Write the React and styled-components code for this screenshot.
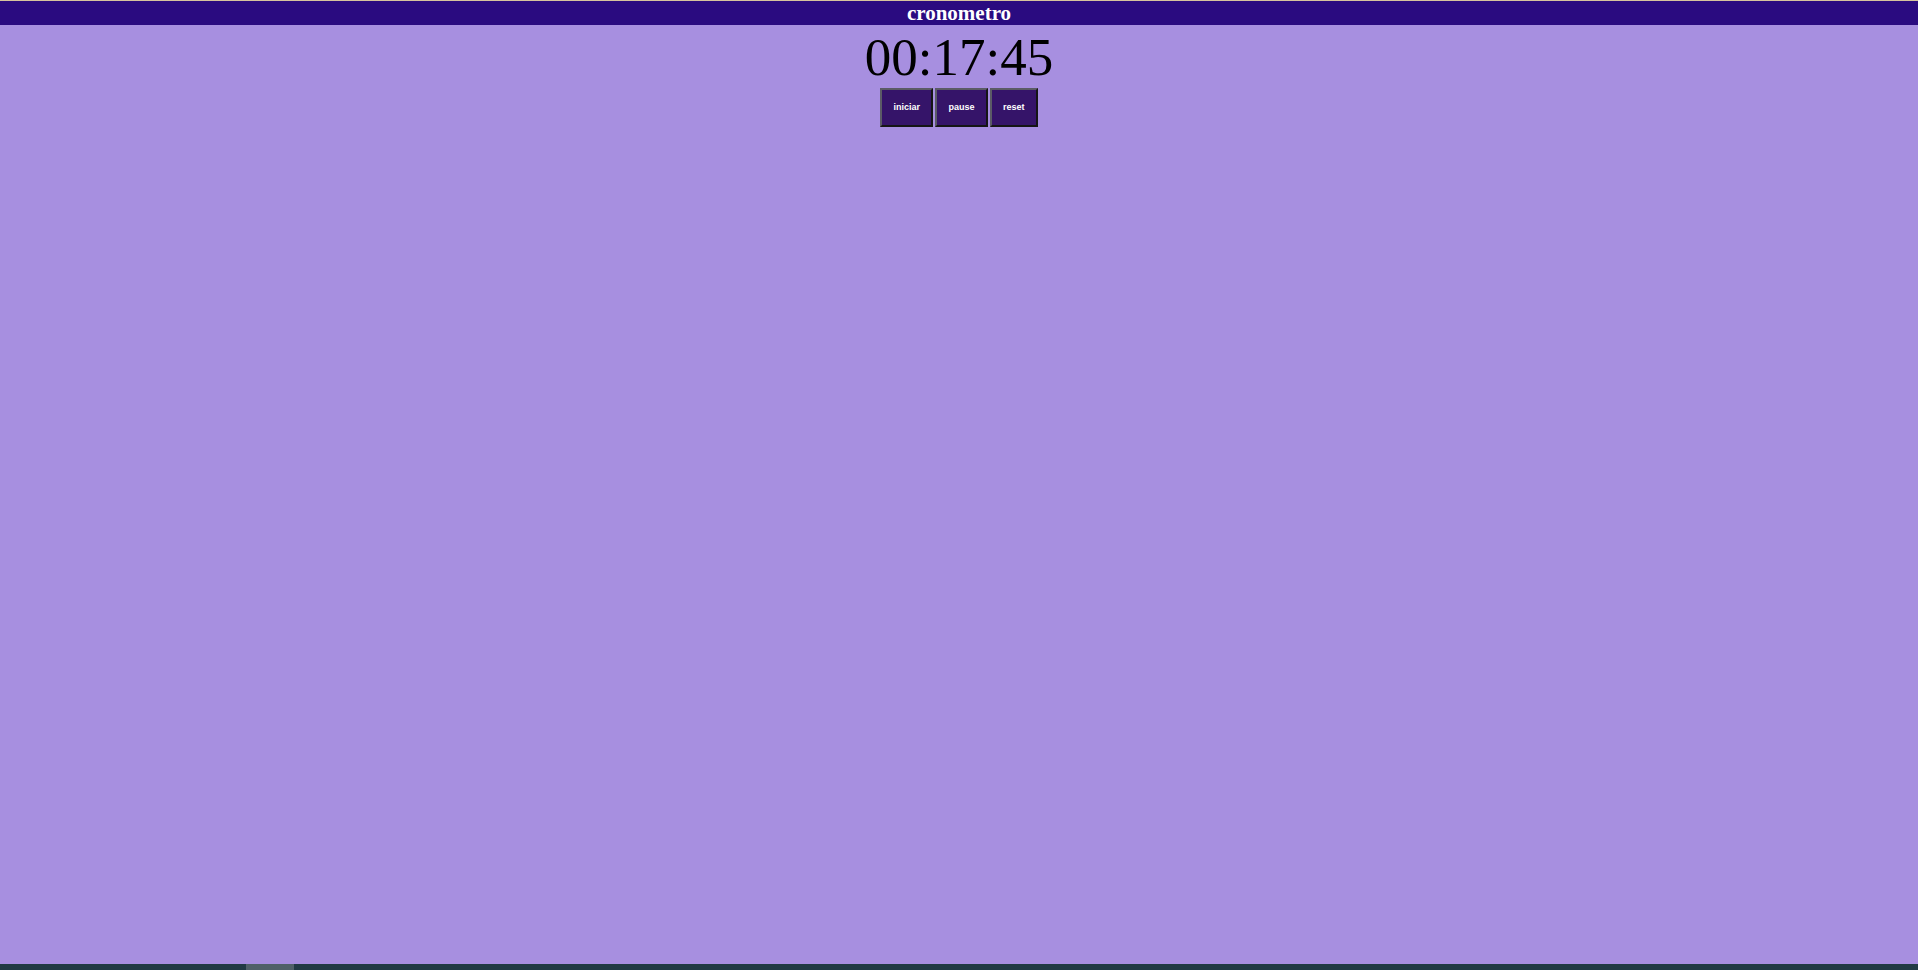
import React from "react";
import styled, { createGlobalStyle } from "styled-components";

const Global = createGlobalStyle`
  html, body { margin: 0; padding: 0; }
  body { background: #a78fe0; font-family: "Liberation Serif", "Times New Roman", serif; overflow: hidden; }
`;

const Page = styled.div`
  min-height: 100vh;
  box-sizing: border-box;
  display: flex;
  flex-direction: column;
  border-top: 1px solid #d6c49e;
  background: #a78fe0;
`;

const Header = styled.header`
  background: #2a0b80;
  color: #ffffff;
  text-align: center;
  font-family: "Liberation Serif", "Times New Roman", serif;
  font-weight: bold;
  font-size: 21px;
  height: 24px;
  line-height: 24px;
`;

const Main = styled.main`
  flex: 1;
  display: flex;
  flex-direction: column;
  align-items: center;
`;

const Time = styled.div`
  font-family: "Liberation Serif", "Times New Roman", serif;
  font-size: 53px;
  line-height: 52px;
  color: #000;
  margin-top: 6px;
`;

const Controls = styled.div`
  display: flex;
  gap: 2.5px;
  margin-top: 5px;
`;

const Button = styled.button`
  font-family: "Liberation Sans", Arial, sans-serif;
  font-size: 9px;
  font-weight: bold;
  line-height: 11px;
  color: #ffffff;
  background: #351469;
  padding: 12px 11px;
  border: 2px solid;
  border-color: #5b5b66 #151515 #151515 #5b5b66;
  cursor: pointer;
`;

const Scrollbar = styled.div`
  height: 6px;
  background: #213a44;
  display: flex;
`;

const Thumb = styled.div`
  margin-left: 246px;
  width: 48px;
  background: #4f6068;
`;

export default function App() {
  return (
    <>
      <Global />
      <Page>
        <Header>cronometro</Header>
        <Main>
          <Time>00:17:45</Time>
          <Controls>
            <Button>iniciar</Button>
            <Button>pause</Button>
            <Button>reset</Button>
          </Controls>
        </Main>
        <Scrollbar>
          <Thumb />
        </Scrollbar>
      </Page>
    </>
  );
}
